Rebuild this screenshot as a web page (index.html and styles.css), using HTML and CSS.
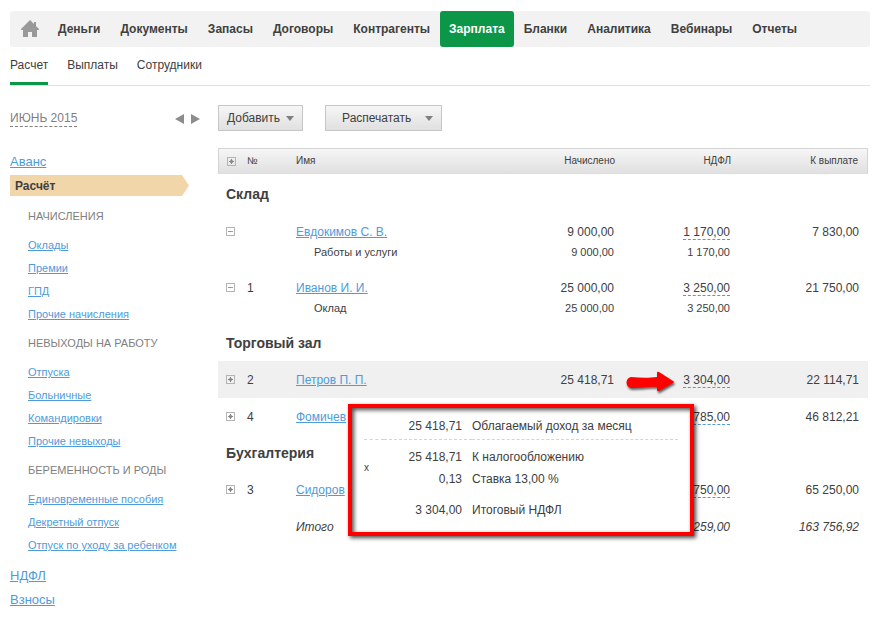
FILE: index.html
```
<!DOCTYPE html>
<html lang="ru">
<head>
<meta charset="UTF-8">
<meta name="viewport" content="width=device-width, initial-scale=1.0">
<title>Зарплата</title>
<link rel="stylesheet" href="styles.css">
</head>
<body>

<nav class="main-menu">
    <a href="#" class="home" aria-label="Главная">
        <svg width="18" height="18" viewBox="0 0 18 18"><path fill="#999" d="M9 0L13 4V2H15V6L18 9V10H16V17H11V12H7V17H2V10H0V9z"/></svg>
    </a>
    <a href="#">Деньги</a>
    <a href="#">Документы</a>
    <a href="#">Запасы</a>
    <a href="#">Договоры</a>
    <a href="#">Контрагенты</a>
    <a href="#" class="active">Зарплата</a>
    <a href="#">Бланки</a>
    <a href="#">Аналитика</a>
    <a href="#">Вебинары</a>
    <a href="#">Отчеты</a>
</nav>

<nav class="sub-menu">
    <a href="#" class="active">Расчет</a>
    <a href="#">Выплаты</a>
    <a href="#">Сотрудники</a>
</nav>

<div class="container">
    <aside class="sidebar">
        <div class="period">
            <button type="button" class="month">ИЮНЬ 2015</button>
            <div class="arrows">
                <button type="button" class="arrow" aria-label="Предыдущий месяц"><svg width="9" height="10" viewBox="0 0 9 10"><path fill="#8c8c8c" d="M9 0V10L0 5z"/></svg></button>
                <button type="button" class="arrow" aria-label="Следующий месяц"><svg width="9" height="10" viewBox="0 0 9 10"><path fill="#8c8c8c" d="M0 0V10L9 5z"/></svg></button>
            </div>
        </div>

        <a href="#" class="section">Аванс</a>
        <div class="current">Расчёт</div>

        <div class="group">
            <h3>НАЧИСЛЕНИЯ</h3>
            <a href="#">Оклады</a>
            <a href="#">Премии</a>
            <a href="#">ГПД</a>
            <a href="#">Прочие начисления</a>
        </div>
        <div class="group">
            <h3>НЕВЫХОДЫ НА РАБОТУ</h3>
            <a href="#">Отпуска</a>
            <a href="#">Больничные</a>
            <a href="#">Командировки</a>
            <a href="#">Прочие невыходы</a>
        </div>
        <div class="group">
            <h3>БЕРЕМЕННОСТЬ И РОДЫ</h3>
            <a href="#">Единовременные пособия</a>
            <a href="#">Декретный отпуск</a>
            <a href="#">Отпуск по уходу за ребенком</a>
        </div>

        <a href="#" class="section">НДФЛ</a>
        <a href="#" class="section">Взносы</a>
    </aside>

    <main class="content">
        <div class="toolbar">
            <button type="button" class="btn">Добавить <span class="caret"></span></button>
            <button type="button" class="btn btn-wide">Распечатать <span class="caret"></span></button>
        </div>

        <div class="table-wrap">
            <table class="payroll">
                <thead>
                    <tr>
                        <th class="col-toggle"><button type="button" class="toggle plus" aria-label="Развернуть все"></button></th>
                        <th class="col-num">№</th>
                        <th>Имя</th>
                        <th class="col-accrued sum">Начислено</th>
                        <th class="col-tax sum">НДФЛ</th>
                        <th class="col-pay sum">К выплате</th>
                    </tr>
                </thead>
                <tbody>
                    <tr class="department first"><th colspan="6">Склад</th></tr>
                    <tr class="open">
                        <td><button type="button" class="toggle" aria-label="Свернуть"></button></td>
                        <td></td>
                        <td><a href="#">Евдокимов С. В.</a></td>
                        <td class="sum">9 000,00</td>
                        <td class="sum"><span class="tax">1 170,00</span></td>
                        <td class="sum">7 830,00</td>
                    </tr>
                    <tr class="detail">
                        <td></td>
                        <td></td>
                        <td>Работы и услуги</td>
                        <td class="sum">9 000,00</td>
                        <td class="sum">1 170,00</td>
                        <td></td>
                    </tr>
                    <tr class="open">
                        <td><button type="button" class="toggle" aria-label="Свернуть"></button></td>
                        <td>1</td>
                        <td><a href="#">Иванов И. И.</a></td>
                        <td class="sum">25 000,00</td>
                        <td class="sum"><span class="tax">3 250,00</span></td>
                        <td class="sum">21 750,00</td>
                    </tr>
                    <tr class="detail">
                        <td></td>
                        <td></td>
                        <td>Оклад</td>
                        <td class="sum">25 000,00</td>
                        <td class="sum">3 250,00</td>
                        <td></td>
                    </tr>
                    <tr class="department"><th colspan="6">Торговый зал</th></tr>
                    <tr class="selected">
                        <td><button type="button" class="toggle plus" aria-label="Развернуть"></button></td>
                        <td>2</td>
                        <td><a href="#">Петров П. П.</a></td>
                        <td class="sum">25 418,71</td>
                        <td class="sum"><span class="tax">3 304,00</span></td>
                        <td class="sum">22 114,71</td>
                    </tr>
                    <tr>
                        <td><button type="button" class="toggle plus" aria-label="Развернуть"></button></td>
                        <td>4</td>
                        <td><a href="#">Фомичев</a></td>
                        <td></td>
                        <td class="sum"><span class="tax">785,00</span></td>
                        <td class="sum">46 812,21</td>
                    </tr>
                    <tr class="department"><th colspan="6">Бухгалтерия</th></tr>
                    <tr>
                        <td><button type="button" class="toggle plus" aria-label="Развернуть"></button></td>
                        <td>3</td>
                        <td><a href="#">Сидоров</a></td>
                        <td></td>
                        <td class="sum"><span class="tax">750,00</span></td>
                        <td class="sum">65 250,00</td>
                    </tr>
                    <tr class="total">
                        <td></td>
                        <td></td>
                        <td>Итого</td>
                        <td></td>
                        <td class="sum">259,00</td>
                        <td class="sum">163 756,92</td>
                    </tr>
                </tbody>
            </table>

            <svg class="pointer" width="50" height="24" viewBox="0 0 50 24"><path fill="#f00" d="M5 6C14 7 24 7 31 6V2Q31 0 33 1L47 10Q49 11 47 12L33 20Q31 21 31 19V16C24 15 14 17 5 17C-1 16-1 7 5 6z"/></svg>

            <div class="popup">
                <table class="calc">
                    <tr class="income">
                        <td class="sign"></td>
                        <td class="value">25 418,71</td>
                        <td>Облагаемый доход за месяц</td>
                    </tr>
                    <tr class="base">
                        <td class="sign" rowspan="2">x</td>
                        <td class="value">25 418,71</td>
                        <td>К налогообложению</td>
                    </tr>
                    <tr>
                        <td class="value">0,13</td>
                        <td>Ставка 13,00 %</td>
                    </tr>
                    <tr class="result">
                        <td class="sign"></td>
                        <td class="value">3 304,00</td>
                        <td>Итоговый НДФЛ</td>
                    </tr>
                </table>
            </div>
        </div>
    </main>
</div>

</body>
</html>
```
FILE: styles.css
```
body {
    font-family: "Liberation Sans", Arial, sans-serif;
    font-size: 12px;
    line-height: 16px;
    color: #404040;
    background-color: #fff;
    margin: 0;
    padding: 11px 15px 10px 10px;
}
a {
    color: #4f9bd9;
}
button {
    font-family: inherit;
    font-size: inherit;
    line-height: inherit;
    color: inherit;
    cursor: pointer;
}
.main-menu {
    display: flex;
    height: 36px;
    background-color: #f2f2f2;
    border-radius: 3px;
}
.main-menu a {
    display: flex;
    align-items: center;
    padding: 0 10px;
    font-weight: bold;
    color: #404040;
    text-decoration: none;
}
.main-menu .home {
    padding: 0 9px 0 11px;
}
.main-menu .active {
    padding: 0 9px;
    color: #fff;
    background-color: #0c9648;
    border-radius: 3px;
}
.sub-menu {
    display: flex;
    gap: 19px;
    border-bottom: 1px solid #e0e0e0;
}
.sub-menu a {
    padding: 10px 0 9px;
    border-bottom: 3px solid transparent;
    color: #404040;
    text-decoration: none;
}
.sub-menu .active {
    border-color: #0c9648;
}
.container {
    display: flex;
    gap: 18px;
}
.sidebar {
    width: 190px;
    flex-shrink: 0;
    padding-top: 24px;
}
.period {
    display: flex;
    justify-content: space-between;
    align-items: center;
    margin-bottom: 27px;
}
.month {
    padding: 0;
    border: none;
    border-bottom: 1px dashed #808080;
    background: none;
    color: #808080;
}
.arrows {
    display: flex;
    gap: 7px;
}
.arrow {
    display: flex;
    padding: 0;
    border: none;
    background: none;
}
.section {
    display: table;
    font-size: 13px;
    margin-bottom: 8px;
}
.current {
    width: 174px;
    padding: 3px 0 2px 5px;
    margin: -3px 0 12px;
    background-color: #f1d6a9;
    clip-path: polygon(0 0, 172px 0, 100% 50%, 172px 100%, 0 100%);
    font-weight: bold;
}
.group {
    padding-left: 18px;
    margin-bottom: 13px;
    font-size: 11px;
}
.group:last-of-type {
    margin-bottom: 15px;
}
.group h3 {
    margin: 0 0 13px;
    font-size: 11px;
    font-weight: normal;
    color: #808080;
}
.group a {
    display: table;
    margin-bottom: 7px;
}
.content {
    flex: 1;
    min-width: 0;
    padding: 19px 2px 0 0;
}
.toolbar {
    display: flex;
    gap: 22px;
    margin-bottom: 17px;
}
.btn {
    display: flex;
    align-items: center;
    gap: 6px;
    padding: 4px 8px;
    border: 1px solid #c6c6c6;
    background: linear-gradient(#f6f6f6, #e0e0e0);
}
.btn-wide {
    gap: 14px;
    padding-left: 16px;
}
.caret {
    border: 4px solid transparent;
    border-top: 5px solid #808080;
    border-bottom: none;
}
.table-wrap {
    position: relative;
}
.payroll {
    width: 100%;
    border-collapse: separate;
    border-spacing: 0;
    table-layout: fixed;
}
.payroll th,
.payroll td {
    padding: 0;
    text-align: left;
}
.payroll td {
    height: 37px;
}
.payroll thead th {
    height: 24px;
    border-top: 1px solid #d4d4d4;
    border-bottom: 1px solid #dedede;
    background: linear-gradient(#f6f6f6, #e0e0e0);
    font-size: 10px;
    font-weight: normal;
}
.payroll thead th:first-child {
    border-left: 1px solid #d4d4d4;
}
.payroll thead th:last-child {
    border-right: 1px solid #d4d4d4;
}
.col-toggle {
    width: 28px;
}
.col-num {
    width: 49px;
}
.col-accrued {
    width: 120px;
}
.col-tax {
    width: 116px;
}
.col-pay {
    width: 128px;
}
.payroll .sum {
    padding-right: 9px;
    text-align: right;
    box-sizing: border-box;
}
.payroll td.sum {
    padding-right: 10px;
}
.payroll td.sum:last-child {
    padding-right: 9px;
}
.payroll .department th {
    height: 36px;
    padding-left: 8px;
    font-size: 14px;
}
.payroll .first th {
    height: 39px;
}
.payroll .open td {
    height: 19px;
    padding-top: 9px;
    padding-bottom: 2px;
}
.payroll .detail td {
    height: 14px;
    padding-top: 2px;
    padding-bottom: 10px;
    font-size: 11px;
    line-height: 14px;
}
.payroll .detail td:nth-child(3) {
    padding-left: 18px;
}
.payroll .selected td {
    background-color: #f0f0f0;
}
.payroll .total td {
    font-style: italic;
}
.tax {
    border-bottom: 1px dashed #4f9bd9;
}
.toggle {
    display: block;
    width: 9px;
    height: 9px;
    padding: 0;
    margin-left: 8px;
    border: 1px solid #b4b4b4;
    background: linear-gradient(#999, #999) center / 5px 1px no-repeat;
}
.plus {
    background: linear-gradient(#888, #888) center / 5px 1px no-repeat, linear-gradient(#888, #888) center / 1px 5px no-repeat, linear-gradient(#aaa, #aaa) center / 3px 3px no-repeat;
}
.pointer {
    position: absolute;
    top: 223px;
    right: 192px;
    filter: drop-shadow(1px 2px 1px rgba(0, 0, 0, 0.6));
}
.popup {
    position: absolute;
    top: 256px;
    right: 174px;
    width: 314px;
    padding: 7px 12px 11px;
    border: 4px solid #f00;
    background-color: #fff;
    box-shadow: 2px 2px 4px rgba(0, 0, 0, 0.7), inset 2px 2px 4px rgba(0, 0, 0, 0.7);
}
.calc {
    width: 100%;
    border-spacing: 0;
}
.calc td {
    padding: 3px 0;
}
.calc .sign {
    width: 20px;
    font-size: 10px;
}
.calc .value {
    width: 78px;
    padding-right: 10px;
    text-align: right;
}
.calc .income td {
    padding-bottom: 5px;
    border-bottom: 1px dashed #d4d4d4;
}
.calc .base td {
    padding-top: 9px;
}
.calc .result td {
    padding-top: 12px;
}
```
